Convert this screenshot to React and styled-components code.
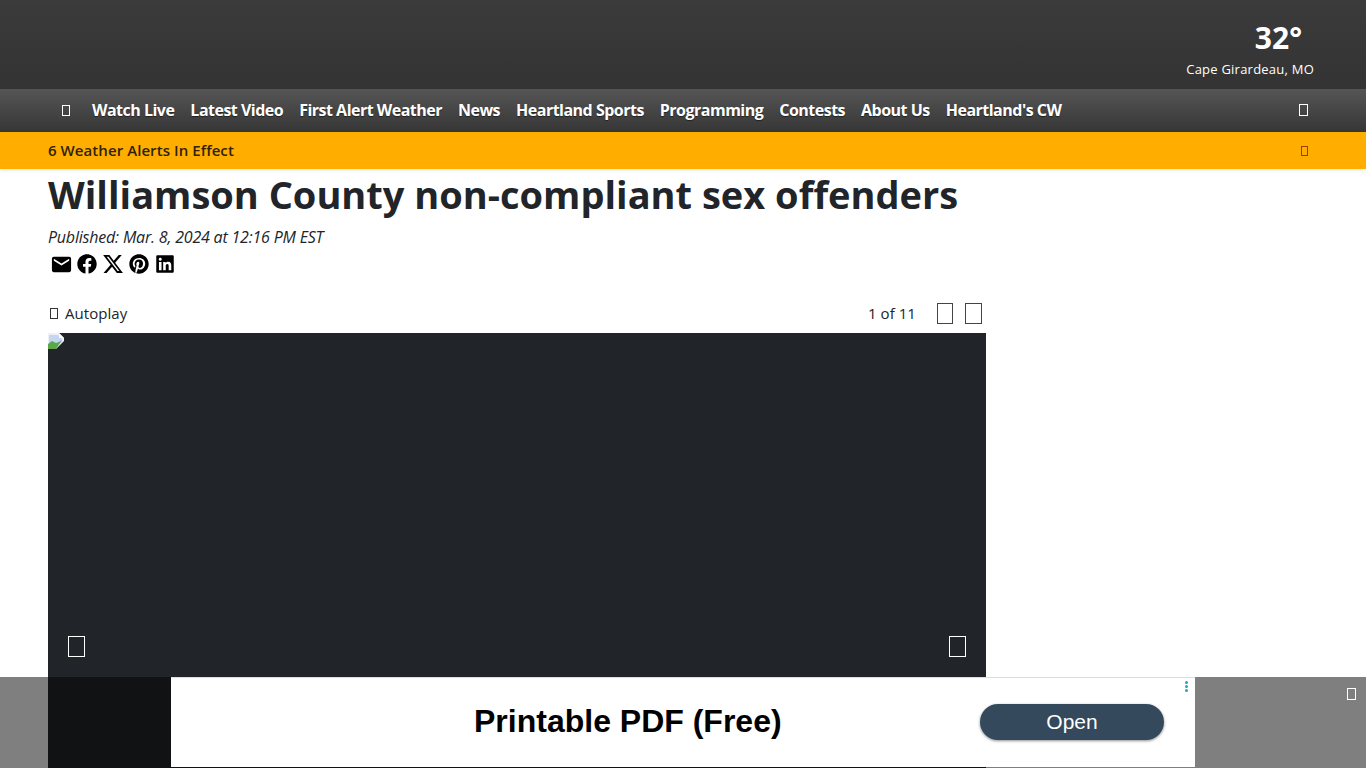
import React from "react";
import styled, { createGlobalStyle } from "styled-components";
import { MdEmail } from "react-icons/md";
import { FaFacebook, FaPinterest, FaLinkedin } from "react-icons/fa";
import { FaXTwitter } from "react-icons/fa6";

const Global = createGlobalStyle`
  html, body {
    margin: 0;
    height: 100%;
    overflow: hidden;
    background: #fff;
    color: #212529;
    font-family: "Open Sans", "Noto Sans", "Liberation Sans", sans-serif;
  }
`;

const NAV_ITEMS = [
  "Watch Live",
  "Latest Video",
  "First Alert Weather",
  "News",
  "Heartland Sports",
  "Programming",
  "Contests",
  "About Us",
  "Heartland's CW",
];

const TopBar = styled.header`
  height: 89px;
  background: linear-gradient(#3b3b3b, #333);
  display: flex;
  justify-content: flex-end;
  padding-right: 52px;
`;
const Weather = styled.div`
  display: flex;
  flex-direction: column;
  align-items: flex-end;
  color: #fff;
  padding-top: 19px;
`;
const Temp = styled.div`
  font-size: 30px;
  font-weight: 700;
  line-height: 38px;
  margin-right: 12px;
`;
const City = styled.div`
  font-size: 13px;
  line-height: 18px;
  margin-top: 3px;
  letter-spacing: 0.23px;
`;
const Nav = styled.nav`
  height: 43px;
  background: linear-gradient(#555, #363636);
  display: flex;
  align-items: center;
  padding: 0 58px 0 62px;
  box-sizing: border-box;
`;
const NavLinks = styled.div`
  display: flex;
  gap: 16px;
  margin: -2px 0 0 22px;
  flex: 1;
`;
const NavLink = styled.a`
  color: #fff;
  font-size: 16px;
  font-weight: 700;
  letter-spacing: -0.51px;
  line-height: 40px;
  white-space: nowrap;
  text-shadow: 0 1px 1px rgba(0, 0, 0, 0.5);
`;
const Tofu = styled.span`
  display: block;
  flex: none;
  box-sizing: border-box;
  width: ${(p) => p.$w || 8}px;
  height: ${(p) => p.$h || 11}px;
  margin-top: ${(p) => p.$lift || 0}px;
  border: 1px solid ${(p) => p.$color || "#fff"};
`;
const AlertBar = styled.div`
  height: 37px;
  background: #ffae00;
  display: flex;
  align-items: center;
  justify-content: space-between;
  padding: 0 58px 0 48px;
  box-shadow: 0 1px 4px rgba(0, 0, 0, 0.12);
  position: relative;
`;
const AlertText = styled.span`
  font-size: 15px;
  font-weight: 600;
  letter-spacing: 0.07px;
  margin-top: -2px;
  color: #2e2208;
`;
const Main = styled.main`
  padding: 0 48px;
  width: 938px;
`;
const Title = styled.h1`
  margin: 0;
  font-size: 38px;
  font-weight: 700;
  line-height: 51px;
  white-space: nowrap;
`;
const Published = styled.div`
  font-size: 16px;
  font-style: italic;
  line-height: 20px;
  margin-top: 7px;
  letter-spacing: -0.2px;
`;
const Share = styled.div`
  display: flex;
  margin-top: 4px;
  height: 26px;
`;
const ShareButton = styled.a`
  width: 26px;
  height: 26px;
  display: flex;
  align-items: center;
  justify-content: center;
  color: #000;
`;
const GalleryBar = styled.div`
  display: flex;
  align-items: center;
  height: 40px;
  margin-top: 16px;
  font-size: 15px;
  letter-spacing: 0.05px;
`;
const Autoplay = styled.div`
  display: flex;
  align-items: center;
  gap: 7px;
  margin-left: 2px;
  flex: 1;
`;
const Count = styled.span`
  margin-right: 21px;
`;
const Pager = styled.div`
  display: flex;
  gap: 12px;
  margin-right: 4px;
`;
const Stage = styled.div`
  height: 520px;
  background: #212529;
  position: relative;
`;
const Arrow = styled.span`
  position: absolute;
  top: 303px;
  ${(p) => (p.$side === "left" ? "left: 20px;" : "right: 20px;")}
`;
const BrokenImage = styled.svg`
  display: block;
  width: 16px;
  height: 16px;
`;
const AdOverlay = styled.div`
  position: fixed;
  left: 0;
  right: 0;
  bottom: 0;
  height: 91px;
  background: rgba(0, 0, 0, 0.5);
  display: flex;
  justify-content: center;
`;
const AdClose = styled.span`
  position: absolute;
  top: 11px;
  right: 10px;
`;
const Ad = styled.div`
  width: 1024px;
  height: 90px;
  background: #fff;
  border-top: 1px solid #ddd;
  box-sizing: border-box;
  position: relative;
  display: flex;
  align-items: center;
  font-family: "Liberation Sans", Arial, sans-serif;
`;
const AdTitle = styled.div`
  margin-left: 303px;
  margin-top: -2px;
  font-size: 32px;
  font-weight: 700;
  color: #000;
  white-space: nowrap;
`;
const AdButton = styled.a`
  position: absolute;
  left: 809px;
  top: 26px;
  width: 184px;
  height: 36px;
  border-radius: 18px;
  background: #34495b;
  box-shadow: 0 1px 3px rgba(0, 0, 0, 0.45);
  color: #fff;
  font-size: 21px;
  line-height: 36px;
  text-align: center;
`;
const AdDots = styled.div`
  position: absolute;
  right: 7px;
  top: 3px;
  display: flex;
  flex-direction: column;
  gap: 1px;
`;
const Dot = styled.i`
  display: block;
  width: 3px;
  height: 3px;
  border-radius: 50%;
  background: #1ea5c8;
`;

export default function App() {
  return (
    <>
      <Global />
      <TopBar>
        <Weather>
          <Temp>32°</Temp>
          <City>Cape Girardeau, MO</City>
        </Weather>
      </TopBar>
      <Nav>
        <Tofu />
        <NavLinks>
          {NAV_ITEMS.map((item) => (
            <NavLink key={item}>{item}</NavLink>
          ))}
        </NavLinks>
        <Tofu $w={9} $h={12} $lift={-2} />
      </Nav>
      <AlertBar>
        <AlertText>6 Weather Alerts In Effect</AlertText>
        <Tofu $w={7} $h={10} $color="#a33a00" />
      </AlertBar>
      <Main>
        <Title>Williamson County non-compliant sex offenders</Title>
        <Published>Published: Mar. 8, 2024 at 12:16 PM EST</Published>
        <Share>
          <ShareButton><MdEmail size={23} /></ShareButton>
          <ShareButton><FaFacebook size={20} /></ShareButton>
          <ShareButton><FaXTwitter size={22} /></ShareButton>
          <ShareButton><FaPinterest size={20} /></ShareButton>
          <ShareButton><FaLinkedin size={20} /></ShareButton>
        </Share>
        <GalleryBar>
          <Autoplay>
            <Tofu $w={8} $h={11} $color="#333" />
            Autoplay
          </Autoplay>
          <Count>1 of 11</Count>
          <Pager>
            <Tofu $w={16} $h={21} $color="#444" />
            <Tofu $w={17} $h={21} $color="#444" />
          </Pager>
        </GalleryBar>
        <Stage>
          <BrokenImage viewBox="0 0 16 16">
            <path d="M0 0h11l5 5v3l-8 8H0z" fill="#eef1f5" />
            <path d="M1 2h9l4 4v3l-6 5H1z" fill="#c4d6f2" />
            <path d="M0 16v-5l4-3 4 2 3-1 3-2-6 9z" fill="#5aa84a" />
            <path d="M11 0v5h5z" fill="#fff" />
          </BrokenImage>
          <Arrow $side="left"><Tofu $w={17} $h={21} /></Arrow>
          <Arrow $side="right"><Tofu $w={17} $h={21} /></Arrow>
        </Stage>
      </Main>
      <AdOverlay>
        <Ad>
          <AdTitle>Printable PDF (Free)</AdTitle>
          <AdButton>Open</AdButton>
          <AdDots><Dot /><Dot /><Dot /></AdDots>
        </Ad>
        <AdClose><Tofu $w={9} $h={12} /></AdClose>
      </AdOverlay>
    </>
  );
}
